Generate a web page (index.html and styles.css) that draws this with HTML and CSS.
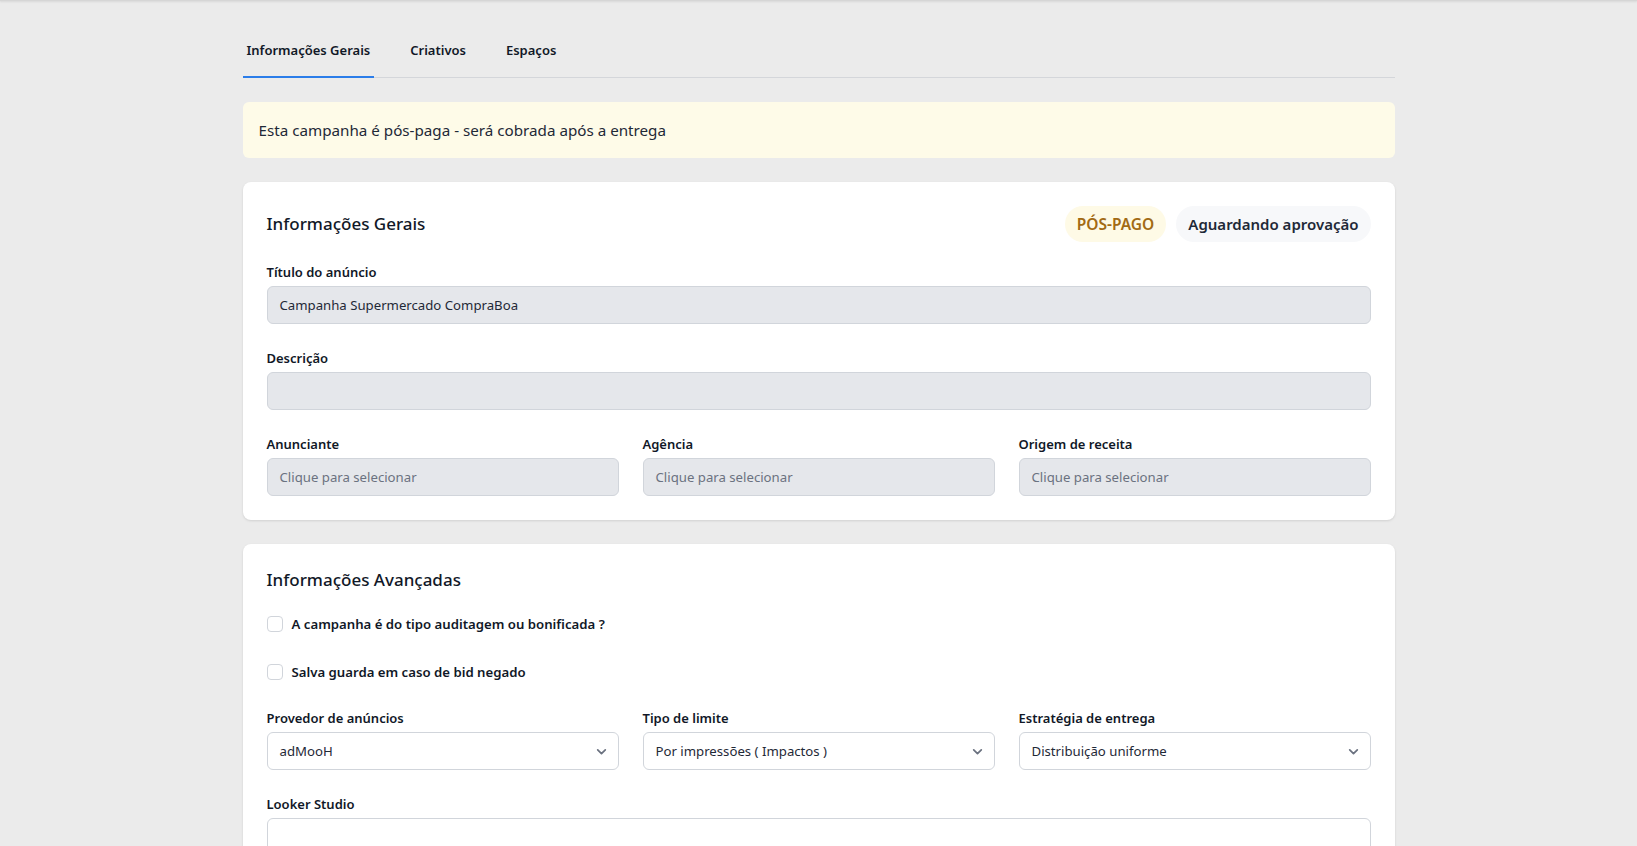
FILE: index.html
```html
<!DOCTYPE html>
<html lang="pt-BR">
<head>
<meta charset="utf-8">
<title>Campanha</title>
<link rel="stylesheet" href="styles.css">
</head>
<body>
<div class="topshade"></div>
<main class="container">
  <nav class="tabs">
    <a class="tab active">Informações Gerais</a>
    <a class="tab">Criativos</a>
    <a class="tab">Espaços</a>
  </nav>

  <div class="alert">Esta campanha é pós-paga - será cobrada após a entrega</div>

  <section class="card">
    <div class="card-head">
      <h2 class="card-title">Informações Gerais</h2>
      <div class="badges">
        <span class="badge badge-warn">PÓS-PAGO</span>
        <span class="badge badge-gray">Aguardando aprovação</span>
      </div>
    </div>
    <div class="field">
      <label class="label">Título do anúncio</label>
      <div class="input disabled">Campanha Supermercado CompraBoa</div>
    </div>
    <div class="field">
      <label class="label">Descrição</label>
      <div class="input disabled"></div>
    </div>
    <div class="grid3">
      <div class="field">
        <label class="label">Anunciante</label>
        <div class="input disabled placeholder">Clique para selecionar</div>
      </div>
      <div class="field">
        <label class="label">Agência</label>
        <div class="input disabled placeholder">Clique para selecionar</div>
      </div>
      <div class="field">
        <label class="label">Origem de receita</label>
        <div class="input disabled placeholder">Clique para selecionar</div>
      </div>
    </div>
  </section>

  <section class="card">
    <div class="card-head-simple">
      <h2 class="card-title">Informações Avançadas</h2>
    </div>
    <label class="check-row"><span class="checkbox"></span>A campanha é do tipo auditagem ou bonificada ?</label>
    <label class="check-row"><span class="checkbox"></span>Salva guarda em caso de bid negado</label>
    <div class="grid3">
      <div class="field">
        <label class="label">Provedor de anúncios</label>
        <div class="input select">adMooH<svg class="chev" viewBox="0 0 12 12"><path d="M2.5 4.5 6 8l3.5-3.5"/></svg></div>
      </div>
      <div class="field">
        <label class="label">Tipo de limite</label>
        <div class="input select">Por impressões ( Impactos )<svg class="chev" viewBox="0 0 12 12"><path d="M2.5 4.5 6 8l3.5-3.5"/></svg></div>
      </div>
      <div class="field">
        <label class="label">Estratégia de entrega</label>
        <div class="input select">Distribuição uniforme<svg class="chev" viewBox="0 0 12 12"><path d="M2.5 4.5 6 8l3.5-3.5"/></svg></div>
      </div>
    </div>
    <div class="field">
      <label class="label">Looker Studio</label>
      <div class="input white"></div>
    </div>
  </section>
</main>
</body>
</html>
```

FILE: styles.css
```css
* { box-sizing: border-box; }
html { scrollbar-width: none; }
html::-webkit-scrollbar { display: none; }
body {
  margin: 0;
  background: #ebebeb;
  font-family: "Noto Sans", "Liberation Sans", sans-serif;
  color: #111827;
}
.topshade {
  position: fixed;
  top: 0; left: 0; right: 0;
  height: 1px;
  background: #d6d6d6;
  box-shadow: 0 1px 2px rgba(0,0,0,0.12);
}
.container {
  width: 1152px;
  margin: 0 auto;
  padding: 24px 0 40px;
}
.tabs {
  display: flex;
  gap: 32px;
  border-bottom: 1px solid #d4d6da;
}
.tab {
  padding: 16px 4px;
  line-height: 20px;
  font-size: 13px;
  font-weight: 600;
  color: #111827;
  border-bottom: 2px solid transparent;
  margin-bottom: -1px;
}
.tab.active { border-bottom-color: #2b7de9; }

.alert {
  margin-top: 24px;
  padding: 16px;
  line-height: 24px;
  font-size: 15.2px;
  background: #fefbe8;
  border-radius: 6px;
  color: #1f2937;
}
.card {
  margin-top: 24px;
  background: #fff;
  border-radius: 8px;
  padding: 24px;
  box-shadow: 0 1px 3px rgba(0,0,0,0.08), 0 1px 2px rgba(0,0,0,0.04);
}
.card-head {
  display: flex;
  align-items: center;
  justify-content: space-between;
  margin-bottom: 20px;
}
.card-head-simple { margin-bottom: 20px; }
.card-title {
  margin: 0;
  font-size: 17px;
  line-height: 24px;
  font-weight: 500;
  color: #111827;
}
.badges { display: flex; gap: 10px; }
.badge {
  padding: 6px 12px;
  line-height: 24px;
  font-size: 15px;
  font-weight: 600;
  border-radius: 999px;
}
.badge-warn { background: #fefae6; color: #a26a14; font-size: 15.5px; }
.badge-gray { background: #f7f8fa; color: #1f2937; }

.field { margin-bottom: 24px; }
.card > .field:last-child, .grid3:last-child .field { margin-bottom: 0; }
.label {
  display: block;
  font-size: 13px;
  line-height: 20px;
  font-weight: 600;
  margin-bottom: 4px;
  color: #111827;
}
.input {
  height: 38px;
  padding: 8px 12px;
  line-height: 20px;
  font-size: 13.2px;
  border: 1px solid #d1d5db;
  border-radius: 6px;
  color: #1f2937;
}
.input.disabled { background: #e5e7eb; }
.input.placeholder { color: #6b7280; }
.input.white { background: #fff; height: 60px; }
.input.select {
  background: #fff;
  display: flex;
  align-items: center;
  justify-content: space-between;
}
.chev {
  width: 13px; height: 13px;
  fill: none;
  stroke: #6b7280;
  stroke-width: 1.6;
  stroke-linecap: round;
  stroke-linejoin: round;
  margin-right: -2px;
}
.grid3 {
  display: grid;
  grid-template-columns: repeat(3, 1fr);
  gap: 24px;
}
.check-row {
  display: flex;
  align-items: center;
  gap: 9px;
  height: 24px;
  margin-bottom: 24px;
  font-size: 13.2px;
  font-weight: 600;
  color: #111827;
}
.checkbox {
  width: 16px; height: 16px;
  border: 1px solid #d1d5db;
  border-radius: 4px;
  background: #fff;
}
```
